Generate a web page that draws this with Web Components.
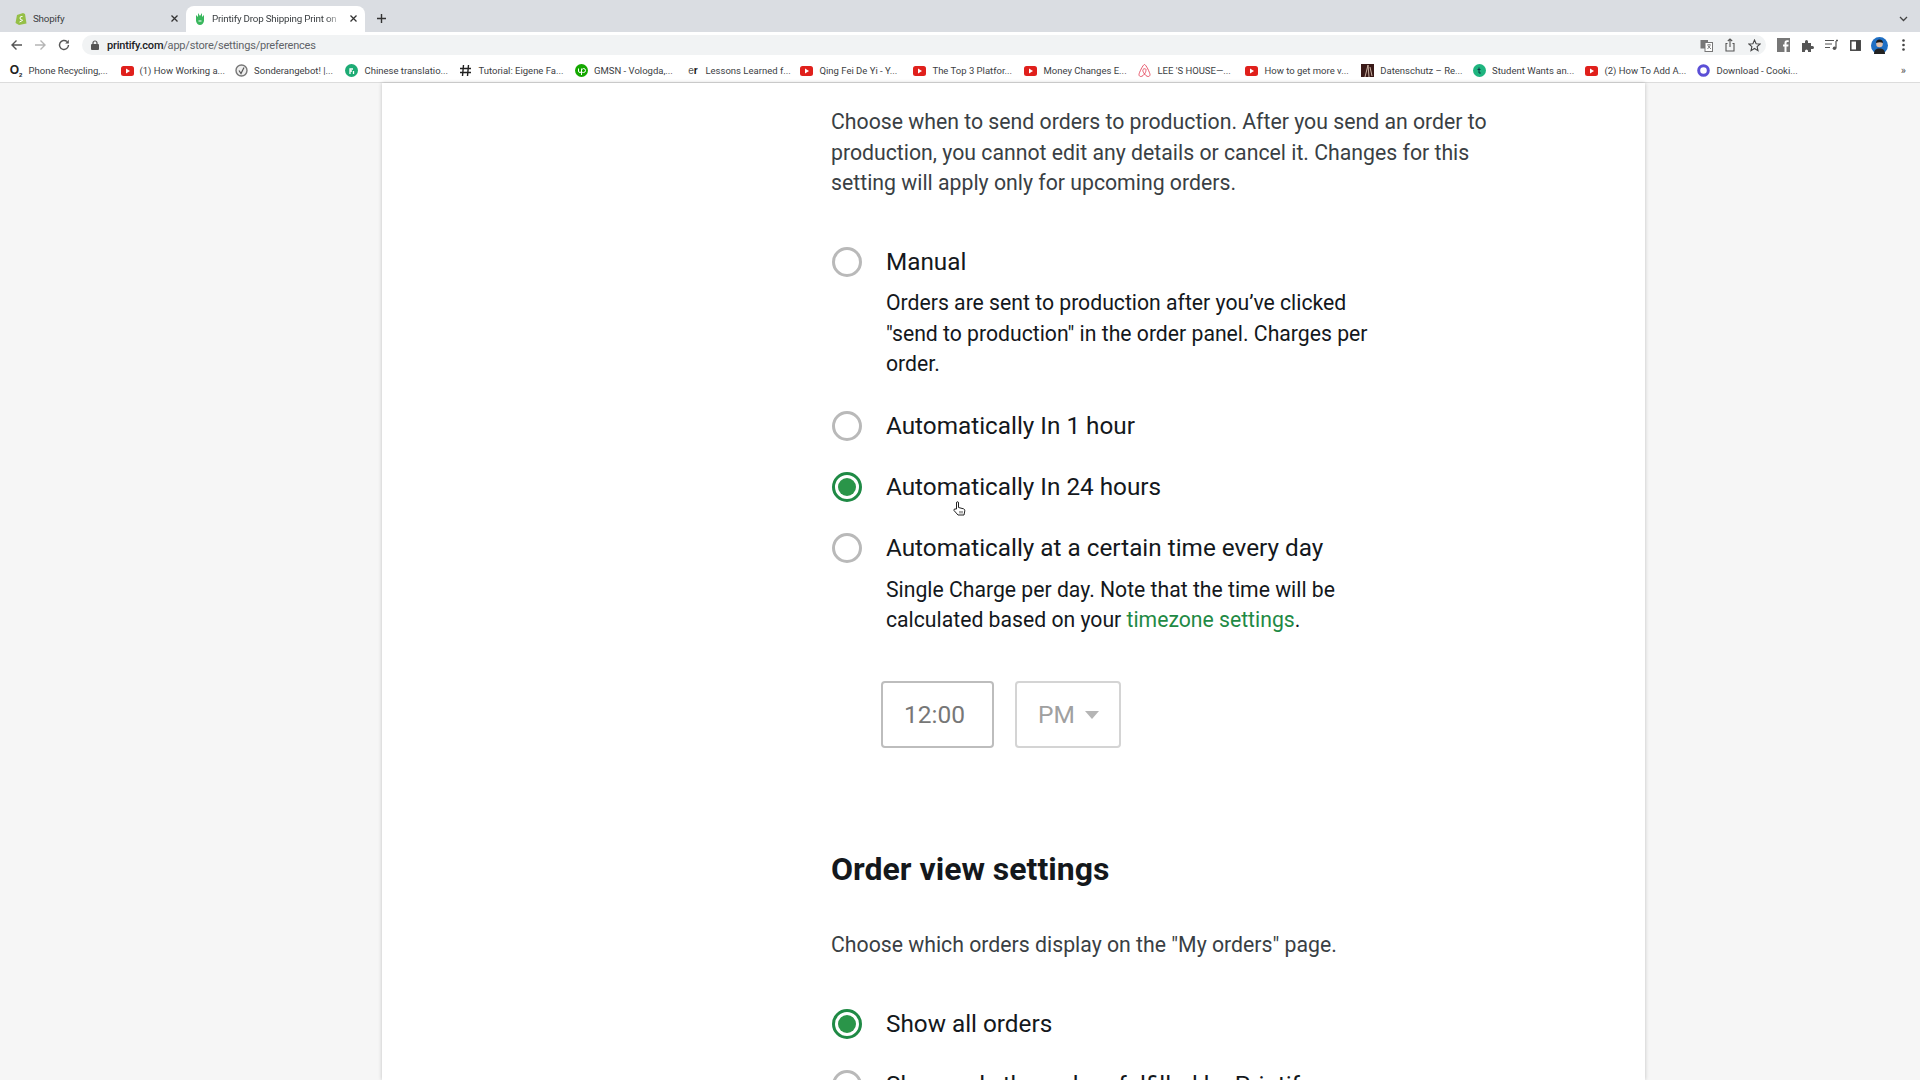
<!DOCTYPE html>
<html>
<head>
<meta charset="utf-8">
<title>Printify preferences</title>
<style>
  html, body { margin: 0; height: 100%; overflow: hidden; background: #f6f6f6; }
  body { font-family: Roboto, "Liberation Sans", sans-serif; display: flex; flex-direction: column; height: 1080px; }
  a { color: #1f8a45; text-decoration: none; }
</style>
</head>
<body>
<script>
"use strict";

const YT = `<svg width="13" height="10" viewBox="0 0 13 10"><rect width="13" height="10" rx="2.5" fill="#e0201c"/><path d="M5 2.6 9 5 5 7.4z" fill="#fff"/></svg>`;

// icon, label, distance to the next bookmark
const BOOKMARKS = [
  [`<span style="font:700 12px 'Liberation Sans';color:#222">O<sub style="font-size:6px">2</sub></span>`, "Phone Recycling,...", 111],
  [YT, "(1) How Working a...", 114.6],
  [`<svg width="13" height="13" viewBox="0 0 13 13"><circle cx="6.5" cy="6.5" r="5.5" fill="#eee" stroke="#777" stroke-width="1.4"/><path d="M4 6.5 6 9.5 9 3.5" stroke="#555" fill="none" stroke-width="1.2"/></svg>`, "Sonderangebot! |...", 110.4],
  [`<svg width="13" height="13" viewBox="0 0 13 13"><circle cx="6.5" cy="6.5" r="6.5" fill="#1dab74"/><path d="M5 10V5h3M5 7h2M8.500 7v3" stroke="#fff" fill="none" stroke-width="1.300"/></svg>`, "Chinese translatio...", 114],
  [`<svg width="13" height="13" viewBox="0 0 13 13"><path d="M4.500 1 3.500 12M9.500 1 8.500 12M1 4.500h11M1 8.500h11" stroke="#222" fill="none" stroke-width="1.400"/></svg>`, "Tutorial: Eigene Fa...", 115.6],
  [`<svg width="13" height="13" viewBox="0 0 13 13"><circle cx="6.500" cy="6.500" r="6.500" fill="#14a800"/><path d="M3.500 4.500v2.500q0 1.500 1.500 1.500T6.500 7V4.500M6.500 11V6q1-1.500 2-1.500a2 2 0 0 1 0 4q-1 0-2-.5" stroke="#fff" fill="none" stroke-width="1"/></svg>`, "GMSN - Vologda,...", 111.4],
  [`<span style="font:400 10px 'Liberation Sans';color:#555">e<b style="color:#111">r</b></span>`, "Lessons Learned f...", 114],
  [YT, "Qing Fei De Yi - Y...", 113],
  [YT, "The Top 3 Platfor...", 111],
  [YT, "Money Changes E...", 114],
  [`<svg width="13" height="15" viewBox="0 0 13 15"><path d="M6.500 1.500C5 1.500 1 10 1 11.500 1 14 4 14.500 6.500 11 9 14.500 12 14 12 11.500 12 10 8 1.500 6.500 1.500ZM6.500 11C5 9 4.500 7.500 5 6.500S8 5.500 8 6.500 8 9 6.500 11Z" fill="none" stroke="#e8566a"/></svg>`, "LEE 'S HOUSE—...", 107],
  [YT, "How to get more v...", 115.8],
  [`<svg width="13" height="13" viewBox="0 0 13 13"><rect width="13" height="13" fill="#3a1a18"/><path d="M4 13 7 1l1 12M9 3l2 9" stroke="#c9b0a0" fill="none"/></svg>`, "Datenschutz – Re...", 111.8],
  [`<svg width="13" height="13" viewBox="0 0 13 13"><circle cx="6.500" cy="6.500" r="6.500" fill="#1fb57f"/><path d="M6 3.500v5.500h1.800M4.500 5.500h3" stroke="#134" fill="none"/></svg>`, "Student Wants an...", 112.4],
  [YT, "(2) How To Add A...", 112],
  [`<svg width="13" height="13" viewBox="0 0 13 13"><circle cx="6.500" cy="6.500" r="4.800" fill="#fff" stroke="#5b4fd6" stroke-width="3"/></svg>`, "Download - Cooki...", 120]
];

class BrowserTab extends HTMLElement {
  constructor() {
    super();
    const shadow = this.attachShadow({ mode: "open" });
    const active = this.hasAttribute("active");
    shadow.innerHTML = `
      <style>
        :host { display: flex; align-items: center; flex: none; height: 26px; box-sizing: border-box;
          width: ${active ? 179 : 183}px; padding: 0 ${active ? 7 : 4.5}px 1px ${active ? 9 : 15}px; gap: ${active ? 7 : 6}px;
          font-size: 9.800px; letter-spacing: -.2px; color: #3c4043;
          ${active ? "background:#fff;border-radius:8px 8px 0 0;" : ""} }
        .label { flex: 1; white-space: nowrap; overflow: hidden;
          ${active ? "-webkit-mask-image:linear-gradient(90deg,#000 88%,transparent);" : ""} }
        svg { flex: none; display: block; }
        ::slotted(svg) { flex: none; display: block; }
      </style>
      <slot name="icon"></slot>
      <span class="label"><slot></slot></span>
      <svg width="9" height="9" viewBox="0 0 9 9"><path d="M1.500 1.500l6 6M7.500 1.500l-6 6" stroke="#333" stroke-width="1.300"/></svg>`;
  }
}
customElements.define("browser-tab", BrowserTab);

class TabStrip extends HTMLElement {
  constructor() {
    super();
    const shadow = this.attachShadow({ mode: "open" });
    shadow.innerHTML = `
      <style>
        :host { display: flex; align-items: flex-end; height: 32px; background: #dadde2; gap: 3px; flex: none; }
        .plus { width: 26px; height: 25px; padding-bottom: 1px; display: flex; align-items: center; justify-content: center; }
        .chev { margin-left: auto; height: 25px; padding-bottom: 1px; width: 24px; margin-right: 5px; display: flex; align-items: center; justify-content: center; }
      </style>
      <slot></slot>
      <div class="plus"><svg width="11" height="11" viewBox="0 0 11 11"><path d="M5.500 1v9M1 5.500h9" stroke="#333" stroke-width="1.400"/></svg></div>
      <div class="chev"><svg width="9" height="6" viewBox="0 0 9 6"><path d="M1 1l3.500 3.500L8 1" stroke="#444" fill="none" stroke-width="1.300"/></svg></div>`;
  }
}
customElements.define("tab-strip", TabStrip);

class BrowserToolbar extends HTMLElement {
  constructor() {
    super();
    const shadow = this.attachShadow({ mode: "open" });
    shadow.innerHTML = `
      <style>
        :host { display: flex; align-items: center; height: 26px; background: #fff; flex: none; padding-left: 4px; }
        svg { display: block; }
        .cells { display: grid; grid-auto-flow: column; grid-auto-columns: 24px; justify-items: center; align-items: center; }
        .omni { width: 1684px; height: 20px; margin-left: 6px; background: #f1f3f4; border-radius: 10px; display: flex; align-items: center;
          padding-left: 9px; box-sizing: border-box; font-size: 11px; letter-spacing: -.2px; color: #5f6368; flex: none; }
        .omni b { font-weight: 500; color: #202124; }
        .lock { margin-right: 8px; }
        .ends { margin-left: auto; }
        .end { margin-left: 5px; }
      </style>
      <div class="cells">
        <svg width="13" height="12" viewBox="0 0 13 12"><path d="M12 6H2M6.500 1.500 2 6l4.500 4.500" stroke="#555" fill="none" stroke-width="1.400"/></svg>
        <svg width="13" height="12" viewBox="0 0 13 12"><path d="M1 6h10M6.500 1.500 11 6l-4.500 4.500" stroke="#b5b5b5" fill="none" stroke-width="1.400"/></svg>
        <svg width="12" height="12" viewBox="0 0 12 12"><path d="M10.500 6A4.500 4.500 0 1 1 9 2.600" stroke="#555" fill="none" stroke-width="1.400"/><path d="M10.800 .8v3.600H7.200z" fill="#555"/></svg>
      </div>
      <div class="omni">
        <svg class="lock" width="8" height="10" viewBox="0 0 8 10"><rect y="4" width="8" height="6" rx="1" fill="#555"/><path d="M2 4.500V3a2 2 0 0 1 4 0v1.500" stroke="#555" fill="none" stroke-width="1.200"/></svg>
        <span><b>printify.com</b>/app/store/settings/preferences</span>
        <div class="cells ends">
          <svg width="13" height="13" viewBox="0 0 13 13"><rect x=".5" y="1" width="7.500" height="8.500" fill="#777"/><rect x="5" y="3.500" width="7.500" height="9" fill="#fff" stroke="#777"/><path d="M7 6h4M9 5v1M7.500 10l2.500-3M8 7l3 3" stroke="#666" stroke-width=".8"/></svg>
          <svg width="12" height="14" viewBox="0 0 12 14"><path d="M3.500 5.500H2v7.500h8V5.500H8.500M6 9V1M3.800 3 6 1l2.200 2" stroke="#555" stroke-width="1.100" fill="none"/></svg>
          <svg width="13" height="13" viewBox="0 0 13 13"><path d="M6.500 1 8.100 4.700l4 .3-3 2.600.9 4-3.500-2.100L3 11.600l.9-4-3-2.600 4-.3z" stroke="#444" stroke-width="1.100" fill="none"/></svg>
        </div>
      </div>
      <div class="cells end">
        <svg width="13" height="14" viewBox="0 0 13 14"><rect width="13" height="14" fill="#777"/><path d="M9.500 14V8.500h1.800l.2-2H9.500V5q0-1 1-1h1.200V2.200H10Q7.500 2.200 7.500 5v1.500H6v2h1.500V14z" fill="#fff"/></svg>
        <svg width="13" height="13" viewBox="0 0 13 13"><path d="M1 4h3V2.500a1.500 1.500 0 0 1 3 0V4h3v3h1.500a1.500 1.500 0 0 1 0 3H10v3H7v-1a1.500 1.500 0 0 0-3 0v1H1z" fill="#555"/></svg>
        <svg width="13" height="12" viewBox="0 0 13 12"><path d="M0 1.500h9M0 5h7M0 8.500h5M11 2v7" stroke="#555" stroke-width="1.200"/><path d="M11 1.500h2" stroke="#555" stroke-width="1.400"/><circle cx="9.500" cy="9.200" r="1.800" fill="#555"/></svg>
        <svg width="11" height="11" viewBox="0 0 11 11"><rect x=".8" y=".8" width="9.400" height="9.400" fill="none" stroke="#444" stroke-width="1.500"/><rect x="6" y="1" width="4" height="9" fill="#444"/></svg>
        <svg width="17" height="17" viewBox="0 0 17 17"><circle cx="8.500" cy="8.500" r="8.500" fill="#1f6fc4"/><path d="M3 17c0-4 2-5.500 5.500-5.500S14 13 14 17z" fill="#222"/><circle cx="8.500" cy="7" r="3.300" fill="#e3c3ae"/><path d="M5 6q0-3.500 3.500-3.500T12 6q-3-1.500-7 0z" fill="#1a1a1a"/></svg>
        <svg width="3" height="12" viewBox="0 0 3 12"><circle cx="1.500" cy="1.500" r="1.300" fill="#444"/><circle cx="1.500" cy="6" r="1.300" fill="#444"/><circle cx="1.500" cy="10.500" r="1.300" fill="#444"/></svg>
      </div>`;
  }
}
customElements.define("browser-toolbar", BrowserToolbar);

class BookmarkBar extends HTMLElement {
  constructor() {
    super();
    const shadow = this.attachShadow({ mode: "open" });
    const items = BOOKMARKS.map(([icon, text, w]) =>
      `<div class="bm" style="width:${w}px"><span class="ic">${icon}</span><span>${text}</span></div>`).join("");
    shadow.innerHTML = `
      <style>
        :host { display: flex; align-items: center; height: 25px; background: #fff; flex: none; padding: 1px 0 0 9.500px;
          font-size: 9.500px; color: #3c4043; border-bottom: 1px solid #dcdcdc; box-sizing: border-box; white-space: nowrap; }
        .bm { display: flex; align-items: center; gap: 6px; flex: none; }
        .ic { width: 13px; display: flex; justify-content: center; align-items: center; flex: none; white-space: nowrap; }
        .more { margin-left: auto; margin-right: 14px; color: #555; font-size: 11px; }
      </style>
      ${items}<span class="more">»</span>`;
  }
}
customElements.define("bookmark-bar", BookmarkBar);

class RadioOption extends HTMLElement {
  constructor() {
    super();
    const shadow = this.attachShadow({ mode: "open" });
    const on = this.hasAttribute("checked");
    shadow.innerHTML = `
      <style>
        :host { display: grid; grid-template-columns: 30px 1fr; column-gap: 24px; align-items: center; padding-left: 1px; }
        .dot { width: 30px; height: 30px; box-sizing: border-box; border-radius: 50%;
          border: 3px solid ${on ? "#1f8a45" : "#b9b9b9"}; display: flex; align-items: center; justify-content: center; }
        .dot i { width: 18px; height: 18px; border-radius: 50%; background: ${on ? "#2a9549" : "transparent"}; }
        .label { font-size: 24.300px; line-height: 36px; color: #14181c; white-space: nowrap; }
        .note { grid-column: 2; font-size: 21.200px; line-height: 30.500px; color: #14181c; max-width: 510px; }
        ::slotted([slot="note"]) { display: block; margin-top: 8.500px; }
      </style>
      <div class="dot"><i></i></div>
      <div class="label"><slot></slot></div>
      <div class="note"><slot name="note"></slot></div>`;
  }
}
customElements.define("radio-option", RadioOption);

class TimePicker extends HTMLElement {
  constructor() {
    super();
    const shadow = this.attachShadow({ mode: "open" });
    shadow.innerHTML = `
      <style>
        :host { display: flex; gap: 21px; margin-left: 50px; }
        .box { height: 67px; box-sizing: border-box; border-radius: 4px; display: flex; align-items: center; font-size: 24.500px; }
        .time { width: 113px; border: 2px solid #bdbdbd; color: #777; padding-left: 21px; }
        .ampm { width: 106px; border: 2px solid #d4d4d4; color: #a0a0a0; padding-left: 21px; gap: 10px; }
        .ampm i { border: 7.500px solid transparent; border-top: 8px solid #b5b5b5; border-bottom: 0; }
      </style>
      <div class="box time">12:00</div>
      <div class="box ampm">PM<i></i></div>`;
  }
}
customElements.define("time-picker", TimePicker);

class SettingsCard extends HTMLElement {
  constructor() {
    super();
    const shadow = this.attachShadow({ mode: "open" });
    shadow.innerHTML = `
      <style>
        :host { display: block; width: 1263px; margin-left: 382px; flex: 1; min-height: 0; overflow: hidden; background: #fff;
          box-shadow: 0 0 4px rgba(0,0,0,.22); box-sizing: border-box; padding: 24px 0 0 449px; color: #14181c; }
        p { margin: 0; font-size: 21.250px; line-height: 30.500px; color: #3a3f44; width: 680px; }
        .group { display: flex; flex-direction: column; }
        .g1 { margin-top: 45px; }
        h2 { margin: 0; font-size: 32px; font-weight: 700; line-height: 40px; color: #14181c; }
      </style>
      <p>Choose when to send orders to production. After you send an order to production, you cannot edit any details or cancel it. Changes for this setting will apply only for upcoming orders.</p>
      <div class="group g1">
        <slot name="timing"></slot>
      </div>
      <h2 style="margin-top:101px">Order view settings</h2>
      <p style="margin-top:40.500px">Choose which orders display on the "My orders" page.</p>
      <div class="group" style="margin-top:45.500px">
        <slot name="view"></slot>
      </div>`;
  }
}
customElements.define("settings-card", SettingsCard);

class CursorHand extends HTMLElement {
  constructor() {
    super();
    const shadow = this.attachShadow({ mode: "open" });
    shadow.innerHTML = `
      <style>:host { position: absolute; left: 953px; top: 501px; width: 13px; height: 15px; }</style>
      <svg width="13" height="15" viewBox="0 0 13 15"><path d="M3.500 8V2q0-1.300 1-1.300T5.500 2v4.500l5 1.300q1.500.5 1.300 2L11 14H5L1 9.500Q.5 8 2 8z" fill="#fff" stroke="#222"/><path d="M7 10v2.500M9 10v2.500" stroke="#222" stroke-width=".8"/></svg>`;
  }
}
customElements.define("cursor-hand", CursorHand);

document.body.innerHTML = `
  <tab-strip>
    <browser-tab><svg slot="icon" width="12" height="13" viewBox="0 0 12 13"><path d="M2 3 8 1l2 1 1.500 9.500L4 13 .5 11z" fill="#95bf47"/><path d="M7.500 4.500Q5 4 5 6t2 2-2.500 2" stroke="#fff" fill="none"/></svg>Shopify</browser-tab>
    <browser-tab active><svg slot="icon" width="10" height="13" viewBox="0 0 10 13"><path d="M1 3 3 5V1l2 3 2-3v4l2-2v6q-1 4-4 4T1 9z" fill="#39b75d"/><path d="M3.500 9h3" stroke="#fff"/></svg>Printify Drop Shipping Print on</browser-tab>
  </tab-strip>
  <browser-toolbar></browser-toolbar>
  <bookmark-bar></bookmark-bar>
  <settings-card>
    <radio-option slot="timing">Manual<span slot="note">Orders are sent to production after you’ve clicked "send to production" in the order panel. Charges per order.</span></radio-option>
    <radio-option slot="timing" style="margin-top:28.500px">Automatically In 1 hour</radio-option>
    <radio-option slot="timing" checked style="margin-top:25px">Automatically In 24 hours</radio-option>
    <radio-option slot="timing" style="margin-top:25px">Automatically at a certain time every day<span slot="note">Single Charge per day. Note that the time will be calculated based on your <a href="#tz" style="color:#1f8a45;text-decoration:none">timezone settings</a>.</span></radio-option>
    <time-picker slot="timing" style="margin-top:45.500px"></time-picker>
    <radio-option slot="view" checked>Show all orders</radio-option>
    <radio-option slot="view" style="margin-top:25px">Show only the orders fulfilled by Printify</radio-option>
  </settings-card>
  <cursor-hand></cursor-hand>
`;
</script>
</body>
</html>
